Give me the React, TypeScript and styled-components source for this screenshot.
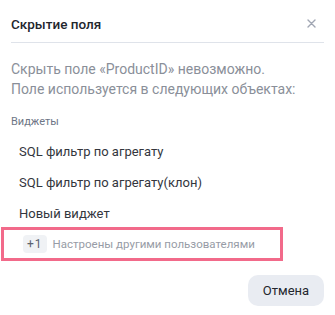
import React from "react";
import styled, { createGlobalStyle } from "styled-components";

const Global = createGlobalStyle`
  html, body { margin: 0; padding: 0; background: #ffffff; }
  body { font-family: Roboto, "Noto Sans", sans-serif; }
`;

const Dialog = styled.div`
  width: 335px;
  height: 315px;
  box-sizing: border-box;
  display: flex;
  flex-direction: column;
  background: #fff;
`;

const Header = styled.div`
  margin: 0 11px;
  height: 43px;
  box-sizing: border-box;
  border-bottom: 1px solid #dfe3ea;
  display: flex;
  align-items: center;
  justify-content: space-between;
  padding-top: 6px;
`;

const Title = styled.h2`
  margin: 0;
  font-size: 13.5px;
  font-weight: 500;
  color: #23262d;
`;

const Close = styled.button`
  border: 0;
  background: none;
  padding: 0;
  margin-right: 7px;
  width: 10px;
  height: 10px;
  display: flex;
  cursor: pointer;
`;

const Message = styled.p`
  margin: 0;
  padding: 16px 11px 0;
  font-size: 14px;
  line-height: 20px;
  color: #8a8f99;
`;

const Body = styled.div`
  padding: 0 11px;
`;

const Section = styled.div`
  margin-top: 16px;
  font-size: 11px;
  line-height: 14px;
  color: #6e7686;
`;

const List = styled.ul`
  list-style: none;
  margin: 7px 0 0;
  padding: 0;
`;

const Item = styled.li`
  padding-left: 8px;
  height: 31px;
  display: flex;
  align-items: center;
  font-size: 13px;
  color: #33363d;
`;

const Others = styled.div`
  margin: -2px 0 0 1px;
  width: 282px;
  height: 34px;
  box-sizing: border-box;
  border: 3px solid #f26a8a;
  display: flex;
  align-items: center;
  gap: 6px;
  padding-left: 19px;
`;

const Badge = styled.span`
  background: #f0f2f5;
  border-radius: 4px;
  padding: 2px 4px;
  font-size: 12px;
  line-height: 14px;
  letter-spacing: 1px;
  color: #5c6270;
`;

const OthersText = styled.span`
  font-size: 11.5px;
  color: #979ca6;
`;

const Footer = styled.div`
  display: flex;
  justify-content: flex-end;
  padding: 14px 11px 0;
`;

const Button = styled.button`
  width: 76px;
  height: 31px;
  border: 0;
  border-radius: 10px;
  background: #e9ecf2;
  font-family: inherit;
  font-size: 13px;
  color: #23262d;
  cursor: pointer;
`;

export default function App() {
  return (
    <>
      <Global />
      <Dialog>
        <Header>
          <Title>Скрытие поля</Title>
          <Close aria-label="Закрыть">
            <svg width="9" height="9" viewBox="0 0 9 9">
              <path d="M1 1L8 8M8 1L1 8" stroke="#a0a6b3" strokeWidth="1.4" strokeLinecap="round" />
            </svg>
          </Close>
        </Header>
        <Message>
          Скрыть поле «ProductID» невозможно.
          <br />
          Поле используется в следующих объектах:
        </Message>
        <Body>
          <Section>Виджеты</Section>
          <List>
            <Item>SQL фильтр по агрегату</Item>
            <Item>SQL фильтр по агрегату(клон)</Item>
            <Item>Новый виджет</Item>
          </List>
        </Body>
        <Others>
          <Badge>+1</Badge>
          <OthersText>Настроены другими пользователями</OthersText>
        </Others>
        <Footer>
          <Button>Отмена</Button>
        </Footer>
      </Dialog>
    </>
  );
}
